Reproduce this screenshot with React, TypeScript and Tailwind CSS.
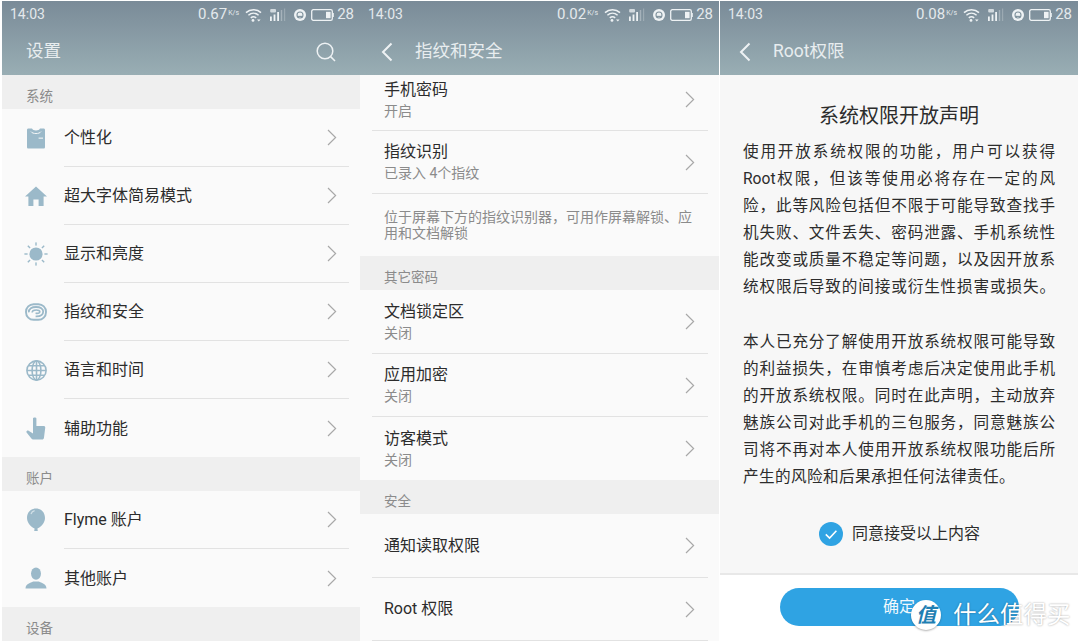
import React from "react";

const ICON = "#9bb9c9";

function Chevron() {
  return (
    <svg width="10" height="17" viewBox="0 0 10 17" className="shrink-0">
      <path d="M1 1 L8.6 8.5 L1 16" fill="none" stroke="#a8a8a8" strokeWidth="1.2" />
    </svg>
  );
}

function Wifi() {
  return (
    <svg width="17" height="14" viewBox="0 0 17 14">
      <path d="M1 4.6 C5.2 .8 11.8 .8 16 4.6" fill="none" stroke="#eef2f4" strokeWidth="1.5" />
      <path d="M3.4 7.3 C6.4 4.7 10.6 4.7 13.6 7.3" fill="none" stroke="#eef2f4" strokeWidth="1.5" />
      <path d="M5.8 9.8 C7.4 8.5 9.6 8.5 11.2 9.8" fill="none" stroke="#eef2f4" strokeWidth="1.5" />
      <circle cx="8" cy="12.4" r="1.4" fill="#eef2f4" />
      <path d="M12 11.4 h3.6 l-1.8 2.2z" fill="#eef2f4" />
    </svg>
  );
}

function Signal() {
  return (
    <svg width="17" height="14" viewBox="0 0 17 14">
      <rect x="1" y="8.5" width="1.8" height="4.5" fill="#eef2f4" />
      <rect x="4.6" y="6.5" width="1.8" height="6.5" fill="#eef2f4" />
      <rect x="8.2" y="4" width="1.8" height="9" fill="#eef2f4" />
      <rect x="11.8" y="2" width="1.4" height="11" fill="#eef2f4" fillOpacity=".35" />
      <rect x="15" y="0.5" width="1.2" height="12.5" fill="#eef2f4" fillOpacity=".25" />
      <rect x="1.2" y="1" width="5.8" height="3.6" rx="1" fill="#eef2f4" fillOpacity=".75" />
    </svg>
  );
}

function Moon() {
  return (
    <svg width="12" height="12" viewBox="0 0 12 12">
      <circle cx="6" cy="6" r="6" fill="#eef2f4" />
      <circle cx="6" cy="6" r="3" fill="none" stroke="#7f929d" strokeWidth="1.1" />
      <path d="M4 7.4 h4" stroke="#7f929d" strokeWidth="1.1" />
    </svg>
  );
}

function Battery() {
  return (
    <svg width="23" height="12" viewBox="0 0 23 12">
      <rect x="0.7" y="0.7" width="20.6" height="10.6" rx="1.6" fill="none" stroke="#eef2f4" strokeWidth="1.3" />
      <rect x="15" y="2.8" width="4.6" height="6.4" fill="#eef2f4" />
      <rect x="21.6" y="4" width="1.2" height="4" fill="#eef2f4" />
    </svg>
  );
}

function Shirt() {
  return (
    <svg width="20" height="21" viewBox="0 0 20 21">
      <path d="M1 2 C1 1 1.6 .5 2.4 .5 H6 C6.6 3 13.4 3 14 .5 H17.6 C18.4 .5 19 1 19 2 V19 C19 20 18.4 20.5 17.6 20.5 H2.4 C1.6 20.5 1 20 1 19 Z" fill={ICON} />
      <path d="M5 3.6 C6.6 6.2 13.4 6.2 15 3.6" fill="none" stroke="#f2f5f6" strokeWidth="1" />
      <rect x="12.6" y="9.6" width="4.4" height="1.1" fill="#f2f5f6" />
    </svg>
  );
}

function Home() {
  return (
    <svg width="22" height="20" viewBox="0 0 22 20">
      <path d="M11 0.5 L22 10.5 H18.6 V20 H13.6 V13.6 H8.4 V20 H3.4 V10.5 H0 Z" fill={ICON} />
    </svg>
  );
}

function Sun() {
  const rays = [0, 45, 90, 135, 180, 225, 270, 315];
  return (
    <svg width="24" height="24" viewBox="0 0 24 24">
      <circle cx="12" cy="12" r="6.6" fill={ICON} />
      {rays.map((r) => (
        <rect key={r} x="11.3" y="0.4" width="1.4" height="3.2" fill={ICON} transform={`rotate(${r} 12 12)`} />
      ))}
    </svg>
  );
}

function Print() {
  return (
    <svg width="22" height="18" viewBox="0 0 22 18" fill="none" stroke={ICON}>
      <rect x="1" y="1.2" width="20" height="15.6" rx="7.6" strokeWidth="1.9" />
      <path d="M3.8 9.4 C3.6 5.4 7 4 11 4 C15.4 4 18.4 5.6 18.2 8.8 C18 12.4 14.6 13.6 10.6 13.4" strokeWidth="1.8" />
      <path d="M7.2 9.6 C7.2 7.6 9.2 7 11.2 7 C13.4 7 15 7.6 14.8 9 C14.6 10.4 12.4 10.6 10.6 10.2" strokeWidth="1.7" />
    </svg>
  );
}

function Globe() {
  return (
    <svg width="21" height="21" viewBox="0 0 21 21" fill="none" stroke={ICON} strokeWidth="1.6">
      <circle cx="10.5" cy="10.5" r="9.6" />
      <ellipse cx="10.5" cy="10.5" rx="4.4" ry="9.6" />
      <path d="M10.5 1 V20 M1 10.5 H20 M2.4 5.8 H18.6 M2.4 15.2 H18.6" />
    </svg>
  );
}

function Hand() {
  return (
    <svg width="20" height="23" viewBox="0 0 20 23">
      <path d="M7 1.5 C7 0.2 10.4 0.2 10.4 1.5 V9 H17.4 C19 9 19.4 10 19.2 11 L18 20.5 C17.9 22 17 22.6 16 22.6 H8 C6.6 22.6 5.8 22 5 21 L0.6 15.6 C-0.2 14.4 1.4 13 2.6 13.8 L7 16.4 Z" fill={ICON} />
    </svg>
  );
}

function Balloon() {
  return (
    <svg width="20" height="24" viewBox="0 0 20 24">
      <path d="M10 0.5 C15.4 0.5 19 4.6 19 10 C19 15.4 14 19.6 11.4 20.6 L11.8 23 H8.2 L8.6 20.6 C6 19.6 1 15.4 1 10 C1 4.6 4.6 0.5 10 0.5 Z" fill={ICON} />
      <path d="M5 6 C5.6 4.2 7 3 8.6 2.6" fill="none" stroke="#d3e0e7" strokeWidth="1.2" />
    </svg>
  );
}

function Person() {
  return (
    <svg width="22" height="22" viewBox="0 0 22 22">
      <ellipse cx="11" cy="6.6" rx="5" ry="6.2" fill={ICON} />
      <path d="M0.5 21.5 C0.5 16.4 7 15.6 8.4 14.6 H13.6 C15 15.6 21.5 16.4 21.5 21.5 Z" fill={ICON} />
    </svg>
  );
}

function Header({ time, speed, children }: { time: string; speed: string; children: React.ReactNode }) {
  return (
    <div className="h-[74px] shrink-0 bg-gradient-to-b from-[#7a8b98] to-[#99aeb4]">
      <div className="flex h-[27px] items-center justify-between pl-[8px] pr-[6px] text-[14px] text-[#e4e9ec]">
        <span>{time}</span>
        <div className="flex items-center">
          <span className="text-[15px]">{speed}</span>
          <span className="mb-[3px] ml-[1px] mr-[6px] text-[7px] leading-none">K/s</span>
          <Wifi />
          <span className="w-[7px]" />
          <Signal />
          <span className="w-[8px]" />
          <Moon />
          <span className="w-[5px]" />
          <Battery />
          <span className="ml-[3px] text-[15px]">28</span>
        </div>
      </div>
      <div className="flex h-[47px] items-center text-[17.5px] text-[#e8edef]">{children}</div>
    </div>
  );
}

function Band({ label }: { label: string }) {
  return (
    <div className="flex h-[34px] shrink-0 items-end bg-[#efefef] pl-[24px] pb-[3px] text-[13.5px] leading-[20px] text-[#8b8b8b]">
      {label}
    </div>
  );
}

function SetRow({ icon, label, last = false }: { icon: React.ReactNode; label: string; last?: boolean }) {
  return (
    <div className="flex h-[58px] shrink-0 items-stretch pl-[22px] pr-[11px]">
      <div className="flex w-[24px] shrink-0 items-center justify-center">{icon}</div>
      <div
        className={`ml-[16px] flex flex-1 items-center justify-between pr-[12px] text-[16px] text-[#2c2c2c] ${
          last ? "" : "border-b border-[#e2e2e2]"
        }`}
      >
        <span className="pt-[1px]">{label}</span>
        <Chevron />
      </div>
    </div>
  );
}

function SecRow({ title, sub, h = "h-[63px]", border = true }: { title: string; sub?: string; h?: string; border?: boolean }) {
  return (
    <div
      className={`ml-[12px] mr-[11px] flex shrink-0 items-center justify-between pl-[12px] pr-[13px] ${h} ${
        border ? "border-b border-[#e2e2e2]" : ""
      }`}
    >
      <div>
        <div className="text-[16px] leading-[22px] text-[#2c2c2c]">{title}</div>
        {sub && <div className="text-[14px] leading-[20px] text-[#8b8b8b]">{sub}</div>}
      </div>
      <Chevron />
    </div>
  );
}

const P1 = [
  "使用开放系统权限的功能，用户可以获得",
  "Root权限，但该等使用必将存在一定的风",
  "险，此等风险包括但不限于可能导致查找手",
  "机失败、文件丢失、密码泄露、手机系统性",
  "能改变或质量不稳定等问题，以及因开放系",
  "统权限后导致的间接或衍生性损害或损失。",
];
const P2 = [
  "本人已充分了解使用开放系统权限可能导致",
  "的利益损失，在审慎考虑后决定使用此手机",
  "的开放系统权限。同时在此声明，主动放弃",
  "魅族公司对此手机的三包服务，同意魅族公",
  "司将不再对本人使用开放系统权限功能后所",
];

function Line({ text, justify = true }: { text: string; justify?: boolean }) {
  return (
    <div className={`h-[27.1px] whitespace-nowrap text-[15.6px] leading-[27.1px] ${justify ? "text-justify [text-align-last:justify]" : "tracking-[0.4px]"}`}>
      {text}
    </div>
  );
}

export default function App() {
  return (
    <div className="relative flex h-[642px] w-[1080px] overflow-hidden bg-white pt-[1px] [font-family:Roboto,'Noto_Sans_CJK_SC',sans-serif]">
      {/* settings */}
      <div className="ml-[2px] flex h-[640px] w-[358px] flex-col overflow-hidden bg-[#fafafa]">
        <Header time="14:03" speed="0.67">
          <span className="ml-[24px] flex-1">设置</span>
          <svg width="20" height="20" viewBox="0 0 20 20" className="mr-[24px]" fill="none" stroke="#eef2f4" strokeWidth="1.5">
            <circle cx="9" cy="9" r="7.8" />
            <path d="M14.6 14.6 L19 19" />
          </svg>
        </Header>
        <Band label="系统" />
        <SetRow icon={<Shirt />} label="个性化" />
        <SetRow icon={<Home />} label="超大字体简易模式" />
        <SetRow icon={<Sun />} label="显示和亮度" />
        <SetRow icon={<Print />} label="指纹和安全" />
        <SetRow icon={<Globe />} label="语言和时间" />
        <SetRow icon={<Hand />} label="辅助功能" last />
        <Band label="账户" />
        <SetRow icon={<Balloon />} label="Flyme 账户" />
        <SetRow icon={<Person />} label="其他账户" last />
        <Band label="设备" />
      </div>

      {/* security */}
      <div className="flex h-[640px] w-[359px] flex-col overflow-hidden bg-[#fafafa]">
        <Header time="14:03" speed="0.02">
          <svg width="12" height="20" viewBox="0 0 12 20" className="ml-[21px]" fill="none" stroke="#eef2f4" strokeWidth="2">
            <path d="M10.5 1.5 L2 10 L10.5 18.5" />
          </svg>
          <span className="ml-[22px]">指纹和安全</span>
        </Header>
        <SecRow title="手机密码" sub="开启" h="h-[56px] pb-[6px]" />
        <SecRow title="指纹识别" sub="已录入 4个指纹" />
        <div className="h-[62px] shrink-0 px-[24px] pt-[15px] text-[14px] leading-[16px] text-[#8b8b8b]">
          <div className="whitespace-nowrap">位于屏幕下方的指纹识别器，可用作屏幕解锁、应</div>
          <div>用和文档解锁</div>
        </div>
        <Band label="其它密码" />
        <SecRow title="文档锁定区" sub="关闭" h="h-[64px]" />
        <SecRow title="应用加密" sub="关闭" />
        <SecRow title="访客模式" sub="关闭" border={false} />
        <Band label="安全" />
        <SecRow title="通知读取权限" h="h-[64px]" />
        <SecRow title="Root 权限" />
      </div>

      {/* root */}
      <div className="ml-[1px] flex h-[640px] w-[358px] flex-col overflow-hidden bg-white">
        <Header time="14:03" speed="0.08">
          <svg width="12" height="20" viewBox="0 0 12 20" className="ml-[19px]" fill="none" stroke="#eef2f4" strokeWidth="2">
            <path d="M10.5 1.5 L2 10 L10.5 18.5" />
          </svg>
          <span className="ml-[22px]">Root权限</span>
        </Header>
        <div className="h-[500px] shrink-0 border-b-2 border-[#e8e8e8] bg-[#f7f7f7] px-[23px] pt-[28px] text-[#2c2c2c]">
          <div className="mb-[10px] text-center text-[20px] leading-[26px]">系统权限开放声明</div>
          {P1.map((t) => (
            <Line key={t} text={t} />
          ))}
          <div className="h-[27.1px]" />
          {P2.map((t) => (
            <Line key={t} text={t} />
          ))}
          <Line text="产生的风险和后果承担任何法律责任。" justify={false} />
          <div className="mt-[31px] flex items-center justify-center gap-[9px] pl-[1px]">
            <svg width="24" height="24" viewBox="0 0 24 24">
              <circle cx="12" cy="12" r="12" fill="#2fa3e3" />
              <path d="M6.8 12.4 L10.6 16 L17.4 8.8" fill="none" stroke="#fff" strokeWidth="1.6" />
            </svg>
            <span className="text-[16px] leading-[24px]">同意接受以上内容</span>
          </div>
        </div>
        <div className="flex flex-1 justify-center pt-[13px]">
          <div className="flex h-[38px] w-[239px] items-center justify-center rounded-full bg-[#2fa3e3] text-[16px] text-[#f0f8fd]">确定</div>
        </div>
      </div>

      {/* watermark */}
      <div className="absolute left-[911px] top-[600px] flex items-center">
        <div className="flex h-[30px] w-[30px] items-center justify-center rounded-full bg-white text-[20px] font-bold italic leading-none text-[#1f7fb3] shadow-[0_1px_2px_rgba(0,0,0,0.3)]">值</div>
        <div className="ml-[12px] whitespace-nowrap text-[23.5px] leading-[30px] text-white [text-shadow:0_0_2px_rgba(0,0,0,0.4)]">什么值得买</div>
      </div>
    </div>
  );
}
